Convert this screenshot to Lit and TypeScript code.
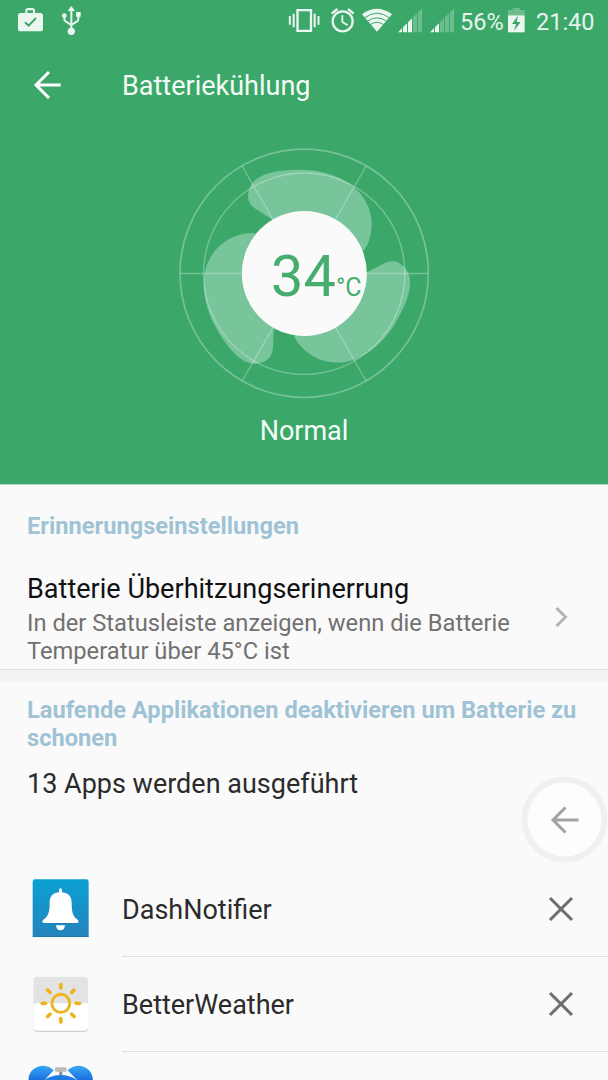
import { LitElement, html, css, svg } from "lit";
import { customElement, property } from "lit/decorators.js";

@customElement("status-bar")
class StatusBar extends LitElement {
  static styles = css`
    :host { display: flex; height: 42px; color: #e6f4ec; font-size: 23.5px; line-height: 44px; white-space: nowrap; }
    svg { display: block; height: 42px; flex: none; fill: #ecf6f0; }
    .left, .right { display: flex; }
    .left { padding-left: 17px; }
    .right { margin-left: auto; padding-right: 13px; }
    .line { fill: none; stroke: #ecf6f0; }
    .w25 { width: 25px; } .w26 { width: 26px; } .w32 { width: 32px; } .w18 { width: 18px; } .w22 { width: 22px; }
    .usb { margin-left: 18px; }
    .alarm { margin-left: 10px; }
    .wifi { margin-left: 6px; }
    .s1 { margin-left: 5px; }
    .s2 { margin-left: 7px; }
    .pct { margin-left: 5px; width: 43px; }
    .bat { margin-left: 4px; }
    .time { margin-left: 11px; width: 59px; }
    .dim { opacity: 0.27; }
    .cut { fill: #3ba86a; }
    .cutline { fill: none; stroke: #3ba86a; }
  `;
  bars(cls: string, lit: number) {
    const bar = (i: number) => {
      const x = i * 15;
      return svg`<path class=${i < lit ? "" : "dim"} d="M${x} 97V${97 - x}L${x + 12} ${85 - x}V97Z"/>`;
    };
    return html`<svg class="w25 ${cls}" viewBox="0 0 75 126">${[0, 1, 2, 3, 4].map(bar)}</svg>`;
  }
  render() {
    return html`
      <div class="left">
        <svg class="w26" viewBox="51 0 78 126">
          <path d="M61 39H76V32Q76 24 84 24H97Q105 24 105 32V39H121Q129 39 129 47V86Q129 94 121 94H62Q54 94 54 86V47Q54 39 61 39ZM82 39H99V31H82Z"/>
          <path class="cutline" stroke-width="6" d="M75 67L86 77L108 54"/>
        </svg>
        <svg class="w22 usb" viewBox="182 0 66 126">
          <path d="M213 18L224 33H202ZM227 36H241V50H227Z"/><circle cx="192" cy="47" r="7"/><circle cx="213" cy="94" r="11"/>
          <path class="line" stroke-width="6" d="M213 28V90M192 48V58Q192 62 196 64L213 75M234 48V58Q234 62 230 64L213 75"/>
        </svg>
      </div>
      <div class="right">
        <svg class="w32" viewBox="24 0 96 126">
          <path class="line" stroke-width="7" d="M52.500 30.500H93V92.500H52.500Z"/>
          <path class="line" stroke-width="6" d="M29.500 48V74M41 41V82M104 41V82M115.500 48V74"/>
        </svg>
        <svg class="w25 alarm" viewBox="150 0 75 126">
          <circle class="line" cx="188" cy="64" r="30" stroke-width="7"/>
          <path class="line" stroke-width="7" d="M155 41L172 27M221 41L204 27"/>
          <path class="line" stroke-width="5.5" d="M187 46V66L203 76"/>
        </svg>
        <svg class="w32 wifi" viewBox="243 0 96 126">
          <path d="M246 43Q291 10 336 43L291 95Z"/>
          <path class="cutline" stroke-width="3" d="M253 54Q291 25 329 54M262 64Q291 43 320 64M271 74Q291 60 311 74"/>
        </svg>
        ${this.bars("s1", 3)} ${this.bars("s2", 2)}
        <span class="pct">56%</span>
        <svg class="w18 bat" viewBox="681 0 54 126">
          <path class="dim" d="M684 46V30H698V24H720V30H734V46Z"/>
          <path d="M684 46H734V97H684Z"/>
          <path class="cut" d="M714 47L696 72H708L702 92L722 66H710Z"/>
        </svg>
        <span class="time">21:40</span>
      </div>`;
  }
}

@customElement("fan-gauge")
class FanGauge extends LitElement {
  @property() value = "34";
  static styles = css`
    :host { display: block; width: 270px; height: 270px; }
    svg { display: block; width: 270px; height: 270px; }
    .blade { fill: #78c49b; }
    .ring { fill: none; stroke: #fff; opacity: 0.3; }
    .spoke { stroke: #fff; stroke-width: 4; opacity: 0.27; }
    .hub { fill: #fafafa; }
    .num { fill: #47ad6e; font-size: 173px; }
    .unit { fill: #47ad6e; font-size: 75px; }
  `;
  render() {
    const blade = "M402 400L305 238L268 214C243 200 234 186 234 167C236 115 285 89 390 89C500 89 602 145 605 250C605 282 598 308 583 330Z";
    return html`<svg viewBox="0 0 810 810">
      ${[0, 120, 240].map((a) => svg`<path class="blade" d=${blade} transform="rotate(${a} 403 400)"/>`)}
      <circle class="ring" cx="402.500" cy="400" r="372.500" stroke-width="5"/>
      <circle class="ring" cx="402.500" cy="401" r="302" stroke-width="4"/>
      ${[0, 60, 120].map((a) => svg`<path class="spoke" d="M30 400.500H774" transform="rotate(${a} 402.500 400.500)"/>`)}
      <circle class="hub" cx="403" cy="400.500" r="187.500"/>
      <text class="num" x="303" y="467">${this.value}</text>
      <text class="unit" x="498" y="467">°C</text>
    </svg>`;
  }
}

const bell = html`<svg width="60" height="60" viewBox="93 50 180 180">
  <defs><linearGradient id="g" x1="0" y1="0" x2="0" y2="1"><stop offset="0" stop-color="#0aa0d2"/><stop offset="1" stop-color="#2584bd"/></linearGradient></defs>
  <path fill="url(#g)" d="M105 57H259Q266 57 266 64V230H98V64Q98 57 105 57Z"/>
  <path fill="#1b74a8" opacity=".5" d="M98 227H266V230H98ZM128 188H236L234 191H130ZM169 209Q181 216 194 209Q181 219 169 209Z"/>
  <path fill="#fff" d="M177 90Q177 84 181.500 84Q186 84 186 90V96C206 98 215 110 215 128C215 160 220 170 234 179Q238 188 231 188H132Q125 188 129 179C143 170 149 160 149 128C149 110 157 98 177 96Z"/>
  <path fill="#fff" d="M168 195H195Q194 210 181.500 210Q169 210 168 195Z"/>
</svg>`;

const sun = html`<svg width="60" height="60" viewBox="93 344 180 180">
  <rect x="101" y="354" width="163" height="163" rx="11" fill="#c4c4c4"/>
  <rect x="101" y="352" width="163" height="162" rx="11" fill="#fff"/>
  <path fill="#e3e3e3" d="M101 432V363Q101 352 112 352H253Q264 352 264 363V432Z"/>
  <circle cx="182.500" cy="432" r="27" fill="none" stroke="#edb51c" stroke-width="9"/>
  ${[0, 45, 90, 135, 180, 225, 270, 315].map(
    (a) => svg`<path d="M182.500 376V386" transform="rotate(${a} 182.500 432)" stroke="#edb51c" stroke-width="11" stroke-linecap="round"/>`
  )}
</svg>`;

const alarm = html`<svg width="68" height="60" viewBox="81 611 204 180">
  <defs><linearGradient id="a" x1="0" y1="0" x2="0" y2="1"><stop offset="0" stop-color="#38a8f5"/><stop offset="1" stop-color="#1467dc"/></linearGradient></defs>
  <path fill="#8d8d8d" d="M178 626H187V650H178Z"/><rect x="165" y="621" width="35" height="13" rx="4" fill="#bdbbba"/>
  <circle cx="182" cy="732" r="88" fill="#1c7ce4"/>
  <path fill="url(#a)" d="M86 665C82 635 105 616 130 616Q148 617 161 630L128 665ZM278 665C282 635 259 616 235 616Q216 617 203 630L237 665Z"/>
</svg>`;

const apps = [
  { name: "DashNotifier", icon: bell },
  { name: "BetterWeather", icon: sun },
  { name: "", icon: alarm },
];

@customElement("app-root")
class AppRoot extends LitElement {
  static styles = css`
    :host { display: block; position: relative; width: 608px; height: 1080px; overflow: hidden; background: #fafafa; font-family: Roboto, sans-serif; color: #2b2b2b; }
    svg { display: block; flex: none; }
    .head { background: linear-gradient(#3ba86a 0 484px, #a9d9bf 484px); height: 485px; color: #f5fbf7; font-size: 27px; display: flex; flex-direction: column; }
    .toolbar { height: 85px; display: flex; align-items: center; }
    .back { margin-left: 31px; }
    .title { margin-left: 59px; padding-top: 3px; line-height: 32px; }
    fan-gauge { margin: 13px 0 0 170px; }
    .state { margin-top: 5px; line-height: 32px; text-align: center; }
    .section { padding: 0 27px; }
    .label { color: #9fc3d5; font-size: 23.65px; font-weight: 700; line-height: 28px; }
    .first { padding-top: 27px; }
    .setting { display: flex; justify-content: space-between; align-items: flex-start; padding-top: 32px; height: 97px; }
    .name { font-size: 27.05px; line-height: 34px; color: #111; }
    .desc { font-size: 23.7px; line-height: 28px; margin-top: 3px; color: #717171; white-space: nowrap; }
    .chev { margin: 33px 9px 0 0; }
    .band { height: 12px; background: #f3f3f3; border-top: 1px solid #dedede; }
    .second { padding-top: 14px; height: 166px; white-space: nowrap; }
    .count { font-size: 27px; line-height: 34px; margin-top: 15px; }
    .row { display: flex; height: 95px; }
    .icon { width: 122px; flex: none; padding-top: 15px; box-sizing: border-box; padding-left: 31px; }
    .row:nth-child(2) .icon { padding-top: 17px; }
    .row:nth-child(3) .icon { padding: 12px 0 0 27px; }
    .body { flex: 1; display: flex; align-items: center; justify-content: space-between; border-bottom: 1px solid #dedede; font-size: 27px; padding-top: 2px; box-sizing: border-box; }
    .close { margin-right: 34px; margin-top: -3px; }
    .fab { position: absolute; left: 521px; top: 776px; }
  `;
  render() {
    return html`
      <div class="head">
        <status-bar></status-bar>
        <div class="toolbar">
          <svg class="back" width="32" height="30" viewBox="93 208 96 90"><path d="M182 253H108M147 214L108 253L147 292" fill="none" stroke="#fff" stroke-width="9"/></svg>
          <div class="title">Batteriekühlung</div>
        </div>
        <fan-gauge value="34"></fan-gauge>
        <div class="state">Normal</div>
      </div>
      <div class="section first">
        <div class="label">Erinnerungseinstellungen</div>
        <div class="setting">
          <div>
            <div class="name">Batterie Überhitzungserinerrung</div>
            <div class="desc">In der Statusleiste anzeigen, wenn die Batterie<br />Temperatur über 45°C ist</div>
          </div>
          <svg class="chev" width="22" height="24" viewBox="0 0 22 24"><path d="M6.500 3L15.500 12L6.500 21" fill="none" stroke="#b4b4b4" stroke-width="3"/></svg>
        </div>
      </div>
      <div class="band"></div>
      <div class="section second">
        <div class="label">Laufende Applikationen deaktivieren um Batterie zu<br />schonen</div>
        <div class="count">13 Apps werden ausgeführt</div>
      </div>
      <div>
        ${apps.map(
          (a) => html`<div class="row">
            <div class="icon">${a.icon}</div>
            <div class="body">
              <span>${a.name}</span>
              <svg class="close" width="26" height="26" viewBox="0 0 26 26"><path d="M2 2L24 24M24 2L2 24" stroke="#6f6f6f" stroke-width="3.100"/></svg>
            </div>
          </div>`
        )}
      </div>
      <svg class="fab" width="87" height="87" viewBox="0 0 87 87">
        <circle cx="43.500" cy="43.500" r="43" fill="#f0f0f0"/>
        <circle cx="43.500" cy="43.500" r="37" fill="#fdfdfd"/>
        <path d="M57.500 44H32M44.500 31.500L32 44L44.500 56.500" fill="none" stroke="#a3a3a3" stroke-width="3"/>
      </svg>`;
  }
}
